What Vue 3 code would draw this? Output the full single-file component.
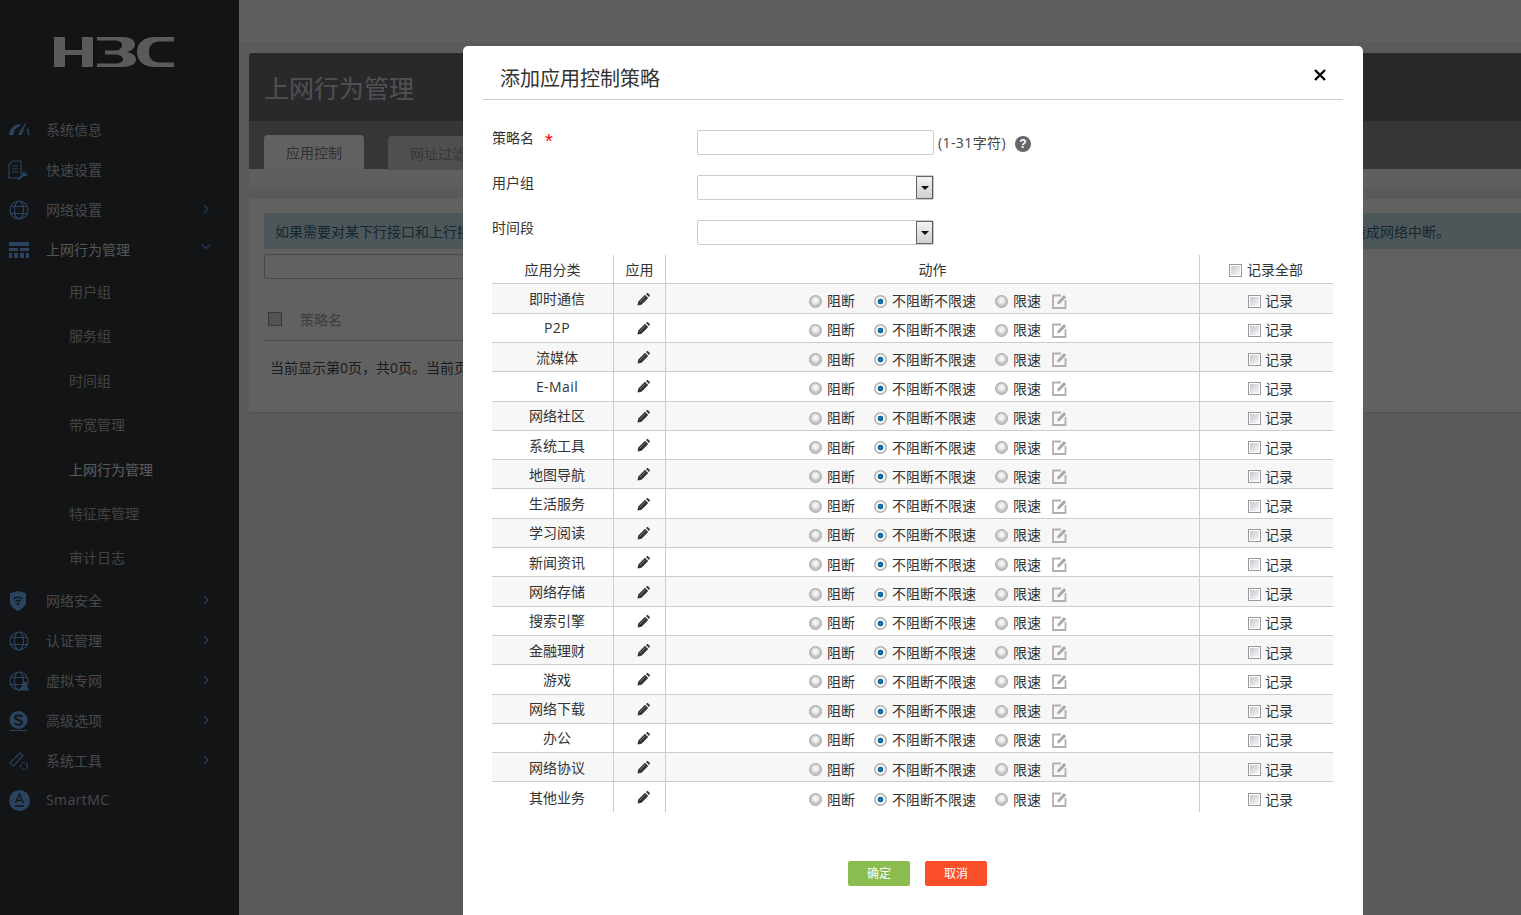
<script setup>
const topItems = [
  { name: '系统信息', icon: 'gauge' },
  { name: '快速设置', icon: 'doc' },
  { name: '网络设置', icon: 'globe', arrow: 'right' },
  { name: '上网行为管理', icon: 'grid', arrow: 'down', active: true }
]
const subItems = [
  { name: '用户组' },
  { name: '服务组' },
  { name: '时间组' },
  { name: '带宽管理' },
  { name: '上网行为管理', active: true },
  { name: '特征库管理' },
  { name: '审计日志' }
]
const bottomItems = [
  { name: '网络安全', icon: 'shield', arrow: 'right' },
  { name: '认证管理', icon: 'globe', arrow: 'right' },
  { name: '虚拟专网', icon: 'vpn', arrow: 'right' },
  { name: '高级选项', icon: 'sq', arrow: 'right' },
  { name: '系统工具', icon: 'tool', arrow: 'right' },
  { name: 'SmartMC', icon: 'smart', latin: true }
]
const categories = ['即时通信', 'P2P', '流媒体', 'E-Mail', '网络社区', '系统工具', '地图导航', '生活服务', '学习阅读', '新闻资讯', '网络存储', '搜索引擎', '金融理财', '游戏', '网络下载', '办公', '网络协议', '其他业务']
const isLatin = (s) => /^[A-Za-z0-9-]+$/.test(s)
</script>

<template>
  <div class="page">
    <aside class="sidebar">
      <div class="logo">
        <svg width="120" height="30" viewBox="0 0 120 30">
          <path class="logo-mark" d="M0 0h11v13h17V0h11v30H28V18H11v12H0z" />
          <path class="logo-mark" d="M43 0H67C77 0 81 3 81 7.500 81 11 78 13.800 73 15 78 16.200 82 18.500 82 22.500 82 27 77 30 67 30H43V26.500H60C66 26.500 69 25 69 22.500 69 19.500 66 17.500 60 17.500H51V13.500H60C65 13.500 68 11.500 68 8 68 5 65 3.500 60 3.500H43z" />
          <path class="logo-mark" d="M120 0H101C90 0 83 6 83 15 83 24 90 30 101 30H120V25.500H106C98 25.500 95 21 95 15 95 9 98 4.500 106 4.500H120z" />
        </svg>
      </div>
      <nav class="nav">
        <div v-for="item in topItems" :key="item.name" class="nav-item" :class="{ active: item.active }">
          <span class="nav-icon">
            <svg v-if="item.icon === 'gauge'" width="22" height="16" viewBox="0 0 22 16"><path class="ic" d="M1 13C1.500 7 6 2.500 12 2L12.500 4C8 5 6 8 5.500 13z" /><path class="ic" d="M10 13L17 1 18 1.500 13.500 13z" /><path class="ic" d="M20 5l1.500 8H20l-1-5z" /></svg>
            <svg v-else-if="item.icon === 'doc'" width="22" height="20" viewBox="0 0 22 20"><path class="ics" d="M4.500 1H13V14M4.500 1L1 4.500V18H13" /><path class="ics" d="M4 6H10M4 9H10M4 12H10" /><path class="ic" d="M9 19l5-4.500c0-2 2-3.500 4-3l-1.500 1.500 1 1.200 2-1c.3 2-1.500 3.500-4 3L11 20z" /></svg>
            <svg v-else-if="item.icon === 'globe'" width="20" height="20" viewBox="0 0 20 20"><circle class="ics" cx="10" cy="10" r="9" /><ellipse class="ics" cx="10" cy="10" rx="4.500" ry="9" /><path class="ics" d="M2 6.500H18M2 13.500H18" /></svg>
            <svg v-else width="20" height="16" viewBox="0 0 20 16"><path class="ic" d="M0 0H20V4H0zM0 6H9V9H0zM11 6H20V9H11zM0 11H3V16H0zM5 11H9V16H5zM11 11H15V16H11zM17 11H20V16H17z" /></svg>
          </span>
          <span class="nav-text">{{ item.name }}</span>
          <svg v-if="item.arrow === 'right'" class="chev" width="8" height="10" viewBox="0 0 8 10"><path class="cv" d="M2 1l4 4-4 4" /></svg>
          <svg v-if="item.arrow === 'down'" class="chev chev-down" width="10" height="8" viewBox="0 0 10 8"><path class="cv" d="M1 1.500l4 4 4-4" /></svg>
        </div>
        <div v-for="item in subItems" :key="'s' + item.name" class="sub-item" :class="{ active: item.active }">{{ item.name }}</div>
        <div v-for="item in bottomItems" :key="'b' + item.name" class="nav-item">
          <span class="nav-icon">
            <svg v-if="item.icon === 'shield'" width="18" height="20" viewBox="0 0 18 20"><path class="ic" d="M8 0L16 2V11C16 15 12 18 8 20 4 18 0 15 0 11V2z" /><path class="wifi" d="M3.500 8C6 5.500 10 5.500 12.500 8M5.500 10.500C7 9 9 9 10.500 10.500" /><circle class="dot" cx="8" cy="13" r="1.300" /></svg>
            <svg v-else-if="item.icon === 'globe'" width="20" height="20" viewBox="0 0 20 20"><circle class="ics" cx="10" cy="10" r="9" /><ellipse class="ics" cx="10" cy="10" rx="4.500" ry="9" /><path class="ics" d="M2 6.500H18M2 13.500H18" /></svg>
            <svg v-else-if="item.icon === 'vpn'" width="20" height="20" viewBox="0 0 20 20"><circle class="ics" cx="10" cy="10" r="9" /><ellipse class="ics" cx="10" cy="10" rx="4.500" ry="9" /><path class="ics" d="M2 6.500H18M2 13.500H18" /><circle class="ic" cx="15.500" cy="13" r="2.500" /><path class="ic" d="M10 19.500c0-3 2.500-4 5.500-4s4.500 1 4.500 4z" /></svg>
            <svg v-else-if="item.icon === 'sq'" width="20" height="20" viewBox="0 0 20 20"><circle class="ic" cx="9.500" cy="9" r="9" /><path class="s-cut" d="M13.500 6C12 4 6 3.500 6 6.500 6 9.500 13 8.500 13 11.500 13 14.500 7 14 5.500 12" /><path class="ic" d="M1 19h17v1H1z" /></svg>
            <svg v-else-if="item.icon === 'tool'" width="20" height="20" viewBox="0 0 20 20"><path class="ics" d="M1 12L11 2l3 2.500L4.500 15z" /><circle class="ics dash" cx="15" cy="15" r="3.500" /></svg>
            <svg v-else width="21" height="21" viewBox="0 0 21 21"><circle class="ic" cx="10.500" cy="10.500" r="10.500" /><path class="wifi" d="M6.500 13L10.500 4l4 9M8 10.500h5M6 16h9" /></svg>
          </span>
          <span class="nav-text" :class="{ latin: item.latin }">{{ item.name }}</span>
          <svg v-if="item.arrow === 'right'" class="chev" width="8" height="10" viewBox="0 0 8 10"><path class="cv" d="M2 1l4 4-4 4" /></svg>
        </div>
      </nav>
    </aside>

    <main class="main">
      <div class="top-strip"></div>
      <section class="panel">
        <h1 class="panel-title">上网行为管理</h1>
        <div class="tabs">
          <span class="tab tab-active">应用控制</span>
          <span class="tab tab-idle">网址过滤</span>
        </div>
        <div class="tab-foot"></div>
        <div class="card">
          <div class="notice">
            <span>如果需要对某下行接口和上行接</span>
            <span>造成网络中断。</span>
          </div>
          <div class="filter"></div>
          <div class="list-head">
            <span class="list-check"></span>
            <span>策略名</span>
          </div>
          <div class="list-foot">当前显示第0页，共0页。当前页</div>
        </div>
      </section>
    </main>

    <div class="overlay"></div>

    <div class="modal">
      <header class="modal-head">
        <h2 class="modal-title">添加应用控制策略</h2>
        <svg class="close" width="12" height="12" viewBox="0 0 12 12"><path d="M1 1L11 11M11 1L1 11" /></svg>
      </header>
      <div class="form">
        <div class="form-row">
          <label class="form-label">策略名<i class="star">*</i></label>
          <div class="field"></div>
          <span class="hint">(1-31字符)</span>
          <span class="help">?</span>
        </div>
        <div class="form-row">
          <label class="form-label">用户组</label>
          <div class="field"><span class="drop"><i></i></span></div>
        </div>
        <div class="form-row">
          <label class="form-label">时间段</label>
          <div class="field"><span class="drop"><i></i></span></div>
        </div>
      </div>
      <div class="grid">
        <div class="grow ghead">
          <div class="c c1">应用分类</div>
          <div class="c c2">应用</div>
          <div class="c c3">动作</div>
          <div class="c c4 c4-head"><span class="cb"></span><span>记录全部</span></div>
        </div>
        <div v-for="(name, i) in categories" :key="name" class="grow body-row" :class="{ odd: i % 2 === 0, last: i === categories.length - 1 }">
          <div class="c c1" :class="{ latin: isLatin(name) }">{{ name }}</div>
          <div class="c c2">
            <svg class="pencil" width="13" height="13" viewBox="0 0 13 13"><path d="M0.500 12.500L1.300 8.500 8 1.800 11.200 5 4.500 11.700zM9 1L9.700 .4C10.200 0 10.800 0 11.200 .4L12.600 1.800C13 2.200 13 2.800 12.600 3.300L12 4z" /><path class="pencil-line" d="M2.800 9.200L8.200 3.800" /></svg>
          </div>
          <div class="c c3 actions">
            <span class="rd"></span><span class="act act-a">阻断</span>
            <span class="rd rd-on"></span><span class="act act-b">不阻断不限速</span>
            <span class="rd"></span><span class="act act-c">限速</span>
            <svg class="edit" width="15" height="15" viewBox="0 0 15 15"><path class="edit-box" d="M9 1.500H1V14H13.500V6" /><path class="edit-pen" d="M5 10.500l.7-2.700L12 1l2.200 2.200-6.500 6.500z" /></svg>
          </div>
          <div class="c c4 c4-row"><span class="cb"></span><span>记录</span></div>
        </div>
      </div>
      <div class="buttons">
        <span class="btn ok">确定</span>
        <span class="btn no">取消</span>
      </div>
    </div>
  </div>
</template>

<style>
html, body { margin: 0; padding: 0; }
</style>

<style scoped>
.page {
  position: relative;
  display: flex;
  width: 1521px;
  height: 915px;
  overflow: hidden;
  background: #e2e2e3;
  font-family: "Open Sans", "Noto Sans CJK SC", sans-serif;
  font-size: 14px;
  color: #333;
}
.latin { letter-spacing: 0.4px; }
.sidebar { flex: 0 0 239px; background: #2f3237; }
.logo { height: 110px; box-sizing: border-box; padding: 37px 0 0 54px; }
.logo svg { display: block; }
.logo-mark { fill: #e0e0e0; }
.nav-item { display: flex; align-items: center; height: 40px; color: #b4b4b4; position: relative; }
.nav-item.active .nav-text { color: #d4d4d4; }
.nav-icon { flex: 0 0 22px; margin: 0 16px 0 8px; display: flex; justify-content: center; align-items: center; }
.nav-icon svg { display: block; }
.nav-text { flex: 1; padding-bottom: 2px; }
.ic { fill: #6aa9ee; stroke: none; }
.ics { fill: none; stroke: #6aa9ee; stroke-width: 1.200; }
.dash { stroke-dasharray: 3 1.500; }
.wifi { fill: none; stroke: #2f3237; stroke-width: 1.300; }
.dot { fill: #2f3237; }
.s-cut { fill: none; stroke: #2f3237; stroke-width: 2; }
.cv { fill: none; stroke: #4d8fd6; stroke-width: 1.400; }
.chev { margin-right: 29px; margin-top: -2px; }
.chev-down { margin-right: 28px; margin-top: -6px; }
.sub-item { height: 44.4px; line-height: 44.4px; padding-left: 69px; color: #a8a8a8; }
.sub-item.active { color: #e2e2e2; }

.main { flex: 1; min-width: 0; }
.top-strip { height: 42px; background: #eeeeef; }
.panel { margin: 11px 0 0 10px; }
.panel-title {
  margin: 0;
  height: 68px;
  box-sizing: border-box;
  padding-left: 15px;
  line-height: 70px;
  font-size: 25px;
  font-weight: 400;
  color: #c9c9cc;
  background: #67676e;
  border-radius: 3px 0 0 0;
}
.tabs { display: flex; align-items: flex-end; gap: 24px; height: 48px; box-sizing: border-box; padding-left: 15px; background: #86878a; }
.tab { display: block; height: 34px; line-height: 36px; text-align: center; border-radius: 4px 4px 0 0; color: #8f8f8f; }
.tab-active { width: 100px; background: #f2f2f2; color: #7b7b7b; }
.tab-idle { width: 110px; margin-bottom: -1px; background: #c6c6cb; color: #8b8b8b; text-align: left; text-indent: 22px; }
.tab-foot { height: 18px; background: #eeeeef; }
.card {
  margin-top: 12px;
  height: 214px;
  box-sizing: border-box;
  padding: 14px 0 0 15px;
  background: #f3f3f4;
  border-bottom: 1px solid #d0d0d0;
}
.notice {
  display: flex;
  justify-content: space-between;
  height: 36px;
  box-sizing: border-box;
  padding: 0 71px 0 11px;
  line-height: 37px;
  background: #c1d9de;
  color: #3a6275;
}
.filter { width: 1000px; height: 25px; margin-top: 5px; box-sizing: border-box; border: 1px solid #b8b8b8; border-radius: 2px; }
.list-head { width: 1000px; display: flex; align-items: center; gap: 18px; height: 62px; box-sizing: border-box; padding: 18px 0 0 4px; border-bottom: 1px solid #b8b8b8; color: #999; }
.list-check { width: 12px; height: 12px; border: 1px solid #8f8f8f; background: #cfcfd0; }
.list-foot { padding: 17px 0 0 6px; line-height: 20px; color: #444; }

.overlay { position: absolute; inset: 0; background: rgba(0, 0, 0, 0.6); }

.modal {
  position: absolute;
  left: 463px;
  top: 46px;
  width: 900px;
  height: 900px;
  background: #fff;
  border-radius: 5px;
  box-sizing: border-box;
  padding: 0 20px;
}
.modal-head { position: relative; height: 54px; box-sizing: border-box; border-bottom: 1px solid #ccc; }
.modal-title { margin: 0; padding: 17px 0 0 17px; font-size: 20px; line-height: 32px; font-weight: 400; color: #333; }
.close { position: absolute; right: 17px; top: 23px; }
.close path { stroke: #000; stroke-width: 2.400; fill: none; }
.form { padding: 30px 0 0 9px; }
.form-row { display: flex; align-items: flex-start; height: 25px; margin-bottom: 20px; }
.form-row:last-child { margin-bottom: 0; }
.form-label { flex: 0 0 205px; line-height: 18px; margin-top: -1px; color: #333; }
.star {
  display: inline-block;
  margin-left: 11px;
  font: 400 20px/24px "Liberation Sans", sans-serif;
  color: #f00;
  vertical-align: top;
}
.field { position: relative; width: 237px; height: 25px; box-sizing: border-box; border: 1px solid #ccc; border-radius: 2px; }
.drop {
  position: absolute;
  right: 0;
  top: 0;
  width: 17px;
  height: 23px;
  box-sizing: border-box;
  border: 1px solid #666;
  border-right-color: #555;
  background: linear-gradient(#f4f4f4, #cfcfcf);
  display: flex;
  align-items: center;
  justify-content: center;
}
.drop i { width: 0; height: 0; border: 4px solid transparent; border-top: 4px solid #111; border-bottom: 0; }
.hint { margin-left: 4px; line-height: 26px; letter-spacing: 0.4px; color: #444; }
.help {
  width: 16px;
  height: 16px;
  margin: 6px 0 0 9px;
  border-radius: 50%;
  background: #666;
  color: #fff;
  font: 700 12px/16px "Liberation Sans", sans-serif;
  text-align: center;
}

.grid { margin: 10px 0 0 9px; width: 841px; }
.grow { display: grid; grid-template-columns: 122px 52px 534px 133px; height: 29.3px; box-sizing: border-box; border-bottom: 1px solid #ccc; }
.grow.last { border-bottom: 0; }
.ghead { height: 29.4px; }
.odd { background: #f7f7f7; }
.c { display: flex; align-items: center; justify-content: center; box-sizing: border-box; border-right: 1px solid #ccc; color: #333; line-height: 20px; }
.c4 { border-right: 0; }
.ghead .c { background: #fff; padding-top: 1px; }
.body-row .c1 { padding: 1px 0 0 9px; }
.body-row .c2 { padding: 1px 0 0 8px; }
.actions { justify-content: flex-start; padding: 5px 0 0 143px; }
.rd {
  flex: 0 0 auto;
  width: 13px;
  height: 13px;
  box-sizing: border-box;
  margin-right: 5px;
  border-radius: 50%;
  border: 1px solid #a8a8a8;
  background: radial-gradient(circle closest-side at 50% 42%, #f8f8f8 0, #ededed 55%, #c4c4c4 100%);
}
.rd-on { background: radial-gradient(circle closest-side, #1a88c4 0, #0a5a90 46%, #fff 58%, #f4f4f4 76%, #bdbdbd 100%); }
.act-a { margin-right: 19px; }
.act-b { margin-right: 19px; }
.act-c { margin-right: 11px; }
.edit { flex: 0 0 auto; }
.edit-box { fill: none; stroke: #b0b0b0; stroke-width: 1.800; }
.edit-pen { fill: #a8a8a8; }
.pencil path { fill: #333; }
.pencil .pencil-line { fill: none; stroke: #8a8a8a; stroke-width: 0.800; }
.cb {
  flex: 0 0 auto;
  width: 13px;
  height: 13px;
  box-sizing: border-box;
  margin-right: 4px;
  border: 1px solid #999;
  box-shadow: inset 0 0 0 1px #fff;
  background: linear-gradient(135deg, #bfc3cb, #fdfdfd);
}
.ghead .c4-head { padding: 2px 1px 0 0; }
.c4-head .cb { margin-right: 5px; }
.c4-row { justify-content: flex-start; padding: 5px 0 0 48px; }
.buttons { display: flex; justify-content: flex-start; gap: 15px; margin: 49.4px 0 0 365px; }
.btn { width: 62px; height: 25px; line-height: 25px; text-align: center; border-radius: 2px; color: #fff; font-size: 12px; }
.ok { background: #8abc4f; }
.no { background: #f94e27; }
</style>
